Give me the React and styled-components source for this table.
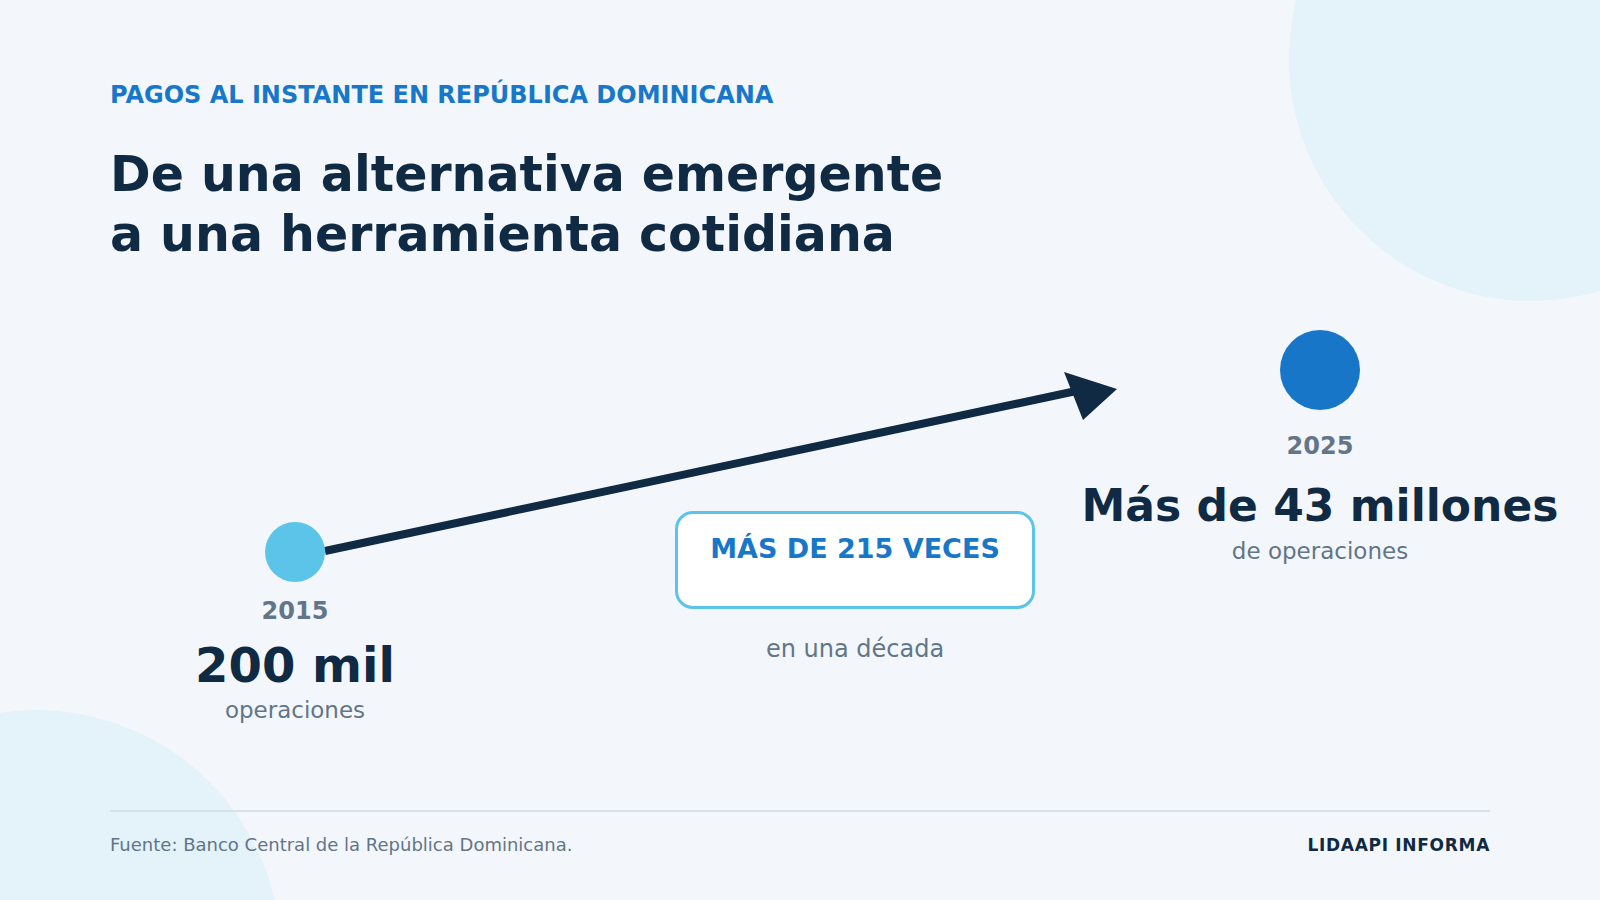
import React from 'react';
import styled, { createGlobalStyle } from 'styled-components';

const GlobalStyle = createGlobalStyle`
  html, body {
    margin: 0;
    padding: 0;
    background: #f3f7fb;
  }
  body {
    font-family: "DejaVu Sans", Verdana, sans-serif;
  }
`;

const Page = styled.main`
  position: relative;
  width: 1600px;
  height: 900px;
  overflow: hidden;
  background: #f3f7fb;
  box-sizing: border-box;
  padding: 81px 110px 0;
  display: flex;
  flex-direction: column;
`;

/* soft background blobs */
const Blob = styled.div`
  position: absolute;
  width: ${(p) => p.$size}px;
  height: ${(p) => p.$size}px;
  border-radius: 50%;
  background: #e4f2fa;
  left: ${(p) => p.$left}px;
  top: ${(p) => p.$top}px;
  z-index: 0;
`;

const Header = styled.header`
  position: relative;
  z-index: 1;
`;

const Kicker = styled.p`
  margin: 0;
  font-size: 24px;
  line-height: 28px;
  font-weight: 700;
  color: #1877c9;
`;

const Title = styled.h1`
  margin: 36px 0 0;
  font-size: 49px;
  line-height: 60px;
  font-weight: 700;
  color: #102a43;
`;

const Chart = styled.section`
  position: relative;
  z-index: 1;
  margin-top: 65px;
  height: 400px;
  display: flex;
  align-items: flex-start;
`;

const ArrowLayer = styled.svg`
  position: absolute;
  left: 0;
  top: 0;
  width: 1100px;
  height: 300px;
  overflow: visible;
  pointer-events: none;
`;

const Node = styled.div`
  position: relative;
  width: ${(p) => p.$width}px;
  margin-left: ${(p) => p.$offset || 0}px;
  padding-top: ${(p) => p.$top}px;
  flex-shrink: 0;
  display: flex;
  flex-direction: column;
  align-items: center;
  text-align: center;
`;

const Dot = styled.div`
  width: ${(p) => p.$size}px;
  height: ${(p) => p.$size}px;
  border-radius: 50%;
  background: ${(p) => p.$color};
`;

const Year = styled.div`
  margin-top: ${(p) => p.$gap}px;
  font-size: 24px;
  line-height: 28px;
  font-weight: 700;
  color: #627589;
`;

const Value = styled.div`
  margin-top: ${(p) => p.$gap}px;
  font-size: ${(p) => p.$size}px;
  line-height: ${(p) => p.$size + 8}px;
  font-weight: 700;
  color: #102a43;
  white-space: nowrap;
`;

const Caption = styled.div`
  margin-top: ${(p) => p.$gap}px;
  font-size: ${(p) => p.$size || 23}px;
  line-height: 28px;
  color: #627589;
  white-space: nowrap;
`;

const Badge = styled.div`
  width: 360px;
  height: 98px;
  box-sizing: border-box;
  border: 3px solid #5bc4e8;
  border-radius: 18px;
  background: #ffffff;
  padding-top: 19px;
  font-size: 27px;
  line-height: 31px;
  font-weight: 700;
  color: #1877c9;
  text-align: center;
`;

const Footer = styled.footer`
  position: relative;
  z-index: 1;
  margin-top: auto;
  margin-bottom: 43px;
  border-top: 2px solid #d5e1eb;
  padding-top: 21px;
  display: flex;
  justify-content: space-between;
  align-items: baseline;
`;

const Source = styled.span`
  font-size: 18px;
  line-height: 24px;
  color: #627589;
`;

const Brand = styled.span`
  font-size: 17px;
  line-height: 24px;
  font-weight: 700;
  letter-spacing: 0.7px;
  color: #102a43;
`;

export default function App() {
  return (
    <>
      <GlobalStyle />
      <Page>
        <Blob $size={484} $left={1289} $top={-183} />
        <Blob $size={490} $left={-209} $top={710} />

        <Header>
          <Kicker>PAGOS AL INSTANTE EN REPÚBLICA DOMINICANA</Kicker>
          <Title>
            De una alternativa emergente
            <br />
            a una herramienta cotidiana
          </Title>
        </Header>

        <Chart>
          <ArrowLayer viewBox="0 0 1100 300">
            <line x1="215" y1="221" x2="985" y2="57" stroke="#102a43" strokeWidth="8" />
            <polygon points="1007,59 954,42 973,90" fill="#102a43" />
          </ArrowLayer>

          <Node $width={370} $top={192}>
            <Dot $size={60} $color="#5bc4e8" />
            <Year $gap={15}>2015</Year>
            <Value $gap={12} $size={48}>200 mil</Value>
            <Caption $gap={3}>operaciones</Caption>
          </Node>

          <Node $width={360} $offset={195} $top={181}>
            <Badge>MÁS DE 215 VECES</Badge>
            <Caption $gap={26} $size={24}>en una década</Caption>
          </Node>

          <Node $width={570} $top={0}>
            <Dot $size={80} $color="#1776c8" />
            <Year $gap={22}>2025</Year>
            <Value $gap={20} $size={44}>Más de 43 millones</Value>
            <Caption $gap={5}>de operaciones</Caption>
          </Node>
        </Chart>

        <Footer>
          <Source>Fuente: Banco Central de la República Dominicana.</Source>
          <Brand>LIDAAPI INFORMA</Brand>
        </Footer>
      </Page>
    </>
  );
}
